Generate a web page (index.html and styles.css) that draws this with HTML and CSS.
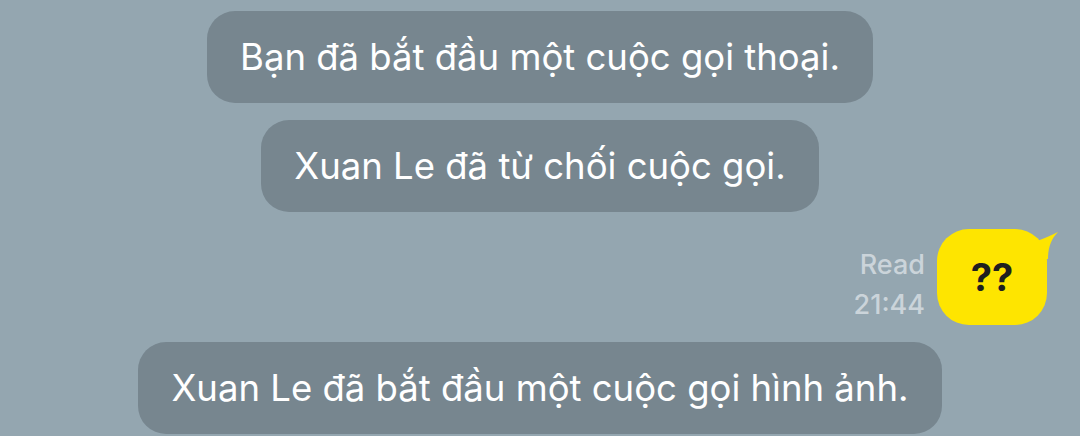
FILE: index.html
```html
<!DOCTYPE html>
<html lang="vi">
  <head>
    <meta charset="UTF-8" />
    <meta name="viewport" content="width=device-width, initial-scale=1.0" />
    <title>Chat</title>
    <link rel="stylesheet" href="styles.css">
  </head>
  <body>
    <main class="chat">
      <div class="notice">Bạn đã bắt đầu một cuộc gọi thoại.</div>
      <div class="notice">Xuan Le đã từ chối cuộc gọi.</div>

      <!-- Tin nhắn của mình -->
      <div class="row-me">
        <div class="meta">
          <span>Read</span>
          <span>21:44</span>
        </div>
        <div class="bubble-me">
          ??
          <svg class="tail" width="32" height="28" viewBox="0 0 32 28">
            <path d="M0 13 C9 11 18 7 31 1 C24 8 21 17 21 28 L0 28 Z" fill="#fee500" />
          </svg>
        </div>
      </div>

      <div class="notice">Xuan Le đã bắt đầu một cuộc gọi hình ảnh.</div>
    </main>
  </body>
</html>
```

FILE: styles.css
```css
* {
  margin: 0;
  padding: 0;
  box-sizing: border-box;
}

body {
  font-family: "Inter", "Noto Sans", sans-serif;
  background: #94a6b0;
  overflow: hidden;
}

.chat {
  display: flex;
  flex-direction: column;
  align-items: center;
  gap: 17px;
  padding-top: 11px;
}

/* Thông báo hệ thống */
.notice {
  height: 92px;
  display: flex;
  align-items: center;
  padding: 0 33px;
  border-radius: 28px;
  background: #77868f;
  color: #ffffff;
  font-size: 36.5px;
  white-space: nowrap;
}

.row-me {
  align-self: stretch;
  display: flex;
  justify-content: flex-end;
  gap: 12px;
  padding-right: 33px;
}

.meta {
  align-self: flex-end;
  display: flex;
  flex-direction: column;
  align-items: flex-end;
  color: #cbd4da;
  font-size: 27px;
  font-weight: 500;
  line-height: 40px;
}

.bubble-me {
  position: relative;
  width: 110px;
  height: 96px;
  display: flex;
  align-items: center;
  justify-content: center;
  border-radius: 32px;
  background: #fee500;
  color: #1f1f1f;
  font-size: 38px;
  font-weight: 700;
}

.bubble-me .tail {
  position: absolute;
  top: 2px;
  right: -12px;
}
```
